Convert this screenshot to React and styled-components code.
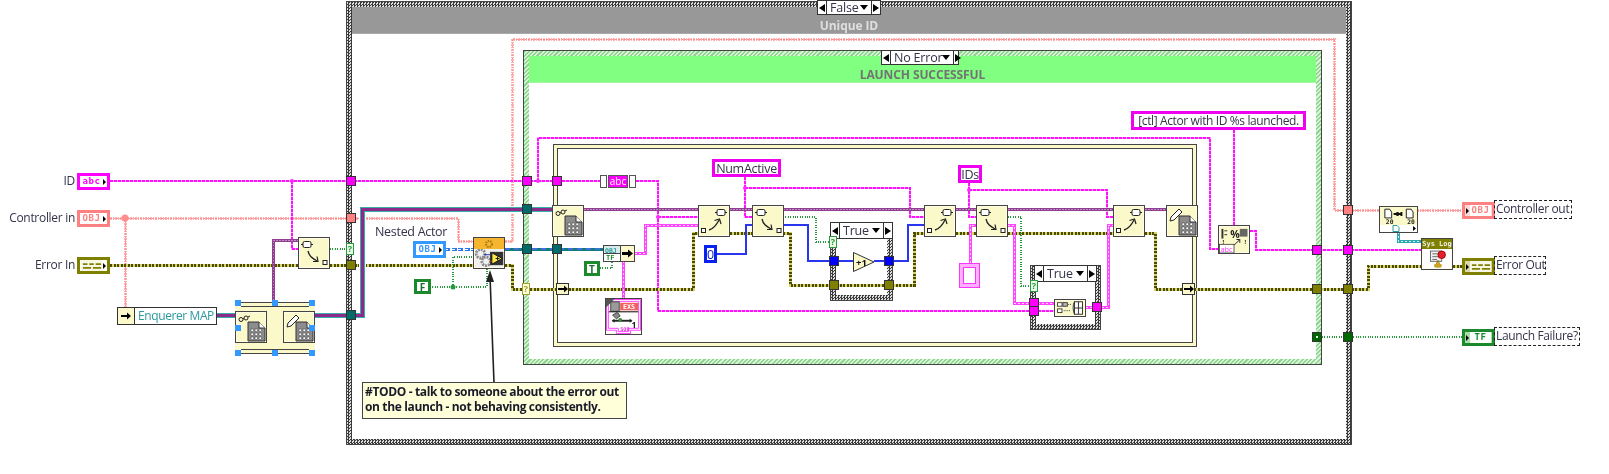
import React from 'react'
import styled, { createGlobalStyle } from 'styled-components'

const Global = createGlobalStyle`
  html, body { margin: 0; background: #fff; }
  body { font-family: "Open Sans", "Noto Sans", sans-serif; }
`

const UI = '"Open Sans", "Noto Sans", sans-serif'
const MONO = '"DejaVu Sans Mono", "Liberation Mono", monospace'

const Canvas = styled.div`
  position: relative;
  width: 1609px;
  height: 474px;
  overflow: hidden;
  background: #fff;
  filter: blur(0.3px);
`

const place = p => `
  position: absolute;
  left: ${p.$x}px;
  top: ${p.$y}px;
`

/* structures */
const Frame = styled.div`
  ${place}
  width: ${p => p.$w}px;
  height: ${p => p.$h}px;
  box-sizing: border-box;
  border: 1px solid #444;
  padding: ${p => p.$pad}px;
  display: flex;
  flex-direction: column;
  background: ${p => p.$hatch
    ? 'repeating-linear-gradient(135deg, #8ed68e 0 1.5px, #d9f3d9 1.5px 3px)'
    : 'repeating-conic-gradient(#3a3a3a 0 25%, #dedede 0 50%) 0 0 / 3px 3px'};
`
const Band = styled.div`
  height: 27px;
  flex: none;
  background: ${p => p.$color};
  border-bottom: 1px solid ${p => p.$edge};
  display: flex;
  align-items: flex-end;
  justify-content: center;
  font: 700 12px/14px ${UI};
  letter-spacing: -0.1px;
  color: ${p => p.$ink};
  box-sizing: border-box;
`
const Inside = styled.div`
  flex: 1;
  background: #fff;
`
const Sequence = styled.div`
  ${place}
  width: ${p => p.$w}px;
  height: ${p => p.$h}px;
  box-sizing: border-box;
  border: 1px solid #444;
  background: #fbf8c9;
  padding: 3px;
  display: flex;
`
const SequenceInner = styled.div`
  flex: 1;
  background: #fff;
  border: 1px solid #444;
`

const SelectorBar = styled.div`
  ${place}
  width: ${p => p.$w}px;
  height: ${p => p.$h}px;
  display: flex;
  box-sizing: border-box;
  border: 1px solid #333;
  background: #fff;
`
const SelectorArrow = styled.div`
  width: 8px;
  flex: none;
  display: flex;
  align-items: center;
  justify-content: center;
  border-${p => (p.$right ? 'left' : 'right')}: 1px solid #333;
  &::after {
    content: '';
    border-top: 4.5px solid transparent;
    border-bottom: 4.5px solid transparent;
    border-${p => (p.$right ? 'left' : 'right')}: 6px solid #000;
  }
`
const SelectorLabel = styled.div`
  flex: 1;
  display: flex;
  align-items: center;
  justify-content: space-between;
  padding: 0 3px 0 3px;
  font: 400 12.5px ${UI};
  letter-spacing: -0.2px;
  white-space: nowrap;
  color: #33334a;
  &::after {
    content: '';
    border-left: 4.5px solid transparent;
    border-right: 4.5px solid transparent;
    border-top: 5px solid #000;
  }
`
function Selector({ x, y, w, h = 15, label }) {
  return (
    <SelectorBar $x={x} $y={y} $w={w} $h={h}>
      <SelectorArrow />
      <SelectorLabel>{label}</SelectorLabel>
      <SelectorArrow $right />
    </SelectorBar>
  )
}

/* tunnels */
const Tunnel = styled.div`
  ${place}
  width: 10px;
  height: 10px;
  margin: -5px 0 0 -5px;
  box-sizing: border-box;
  background: ${p => p.$color};
  border: 1px solid #333;
  display: flex;
  align-items: center;
  justify-content: center;
  ${p => p.$dot && `&::after { content: ''; width: 2px; height: 2px; background: #dfd; }`}
`
const Selectorq = styled.div`
  ${place}
  width: 8px;
  height: 12px;
  margin: -6px 0 0 -4px;
  box-sizing: border-box;
  background: ${p => p.$bg};
  border: 1px solid ${p => p.$color};
  color: ${p => p.$color};
  font: 700 9px/10px ${UI};
  text-align: center;
`

/* terminals on the panel */
const Terminal = styled.div`
  ${place}
  width: 33px;
  height: 17px;
  box-sizing: border-box;
  border: 3px solid ${p => p.$color};
  background: ${p => p.$fill};
  display: flex;
  align-items: center;
  padding: 0 1px;
  flex-direction: ${p => (p.$out ? 'row' : 'row-reverse')};
  gap: 1px;
`
const TerminalBody = styled.div`
  flex: 1;
  height: 100%;
  background: ${p => p.$fill};
  box-sizing: border-box;
  display: flex;
  align-items: center;
  justify-content: center;
  font: 700 9px/1 ${MONO};
  letter-spacing: 0.5px;
  color: ${p => p.$color};
`
const TerminalArrow = styled.div`
  flex: none;
  border-top: 3px solid transparent;
  border-bottom: 3px solid transparent;
  border-left: 3px solid #000;
`
const Caption = styled.div`
  position: absolute;
  top: ${p => p.$y}px;
  right: ${p => 1609 - p.$r}px;
  font: 400 12px/16px ${UI};
  letter-spacing: -0.3px;
  color: #33334a;
  white-space: nowrap;
`
const DashedCaption = styled.div`
  ${place}
  height: ${p => p.$h}px;
  width: ${p => p.$w}px;
  box-sizing: border-box;
  border: 1px dashed #222;
  font: 400 12px/${p => p.$h - 3}px ${UI};
  letter-spacing: -0.35px;
  color: #33334a;
  padding-left: 1px;
  white-space: nowrap;
`
const PlainLabel = styled.div`
  ${place}
  font: 400 12.5px/16px ${UI};
  letter-spacing: -0.3px;
  color: #33334a;
  white-space: nowrap;
`

/* constants */
const Konst = styled.div`
  ${place}
  width: ${p => p.$w}px;
  height: ${p => p.$h}px;
  box-sizing: border-box;
  border: ${p => p.$b || 3}px solid ${p => p.$color};
  background: #fff;
  display: flex;
  align-items: center;
  justify-content: center;
  color: ${p => p.$ink || '#33334a'};
  font: ${p => p.$weight || 400} ${p => p.$size || 12.5}px ${UI};
  letter-spacing: ${p => p.$track || 0}px;
  white-space: nowrap;
`
const EmptyArray = styled.div`
  ${place}
  width: 21px;
  height: 25px;
  box-sizing: border-box;
  border: 1px solid #ff33ff;
  padding: 3px;
  background: #ffb0ff;
  display: flex;
  &::after { content: ''; flex: 1; background: #fff; border: 1px solid #ff33ff; }
`
const StringConst = styled.div`
  ${place}
  display: flex;
  height: 13px;
  gap: 1px;
`
const StringCap = styled.div`
  width: 5px;
  background: #fff;
  border: 1px solid #555;
`
const StringCore = styled.div`
  width: 18px;
  background: #f0f;
  color: #fff;
  border: 1px solid #555;
  font: 400 10px/11px ${UI};
  text-align: center;
`

/* nodes */
const Node = styled.div`
  ${place}
  width: ${p => p.$w || 32}px;
  height: ${p => p.$h || 32}px;
  box-sizing: border-box;
  background: ${p => p.$bg || '#fbf8c9'};
  border: 1px solid #444;
  box-shadow: inset 0 0 0 1px #fffde8;
  display: flex;
  flex-direction: column;
  overflow: hidden;
`
const NodeBar = styled.div`
  height: ${p => p.$h}px;
  flex: none;
  background: ${p => p.$color};
  color: #eee;
  font: 700 7px/${p => p.$h}px ${MONO};
  text-align: center;
  display: flex;
  align-items: center;
  justify-content: center;
`
const NodeFill = styled.div`
  flex: 1;
  min-height: 0;
  display: flex;
  background: ${p => p.$bg || 'transparent'};
`
const Icon = styled.svg`
  display: block;
  width: 100%;
  height: 100%;
`
const MapNode = styled.div`
  ${place}
  width: 100px;
  height: 18px;
  box-sizing: border-box;
  border: 1px solid #333;
  display: flex;
  background: #fff;
`
const MapNodeArrow = styled.div`
  width: 16px;
  flex: none;
  background: #fbf8c9;
  border-right: 1px solid #333;
  display: flex;
  align-items: center;
  justify-content: center;
`
const MapNodeText = styled.div`
  flex: 1;
  color: #2c9a9c;
  font: 400 12px/16px ${UI};
  letter-spacing: -0.4px;
  padding-left: 3px;
  white-space: nowrap;
`
const ArrowTab = styled.div`
  ${place}
  width: 13px;
  height: 12px;
  box-sizing: border-box;
  background: #fbf8c9;
  border: 1px solid #333;
  display: flex;
  align-items: center;
  justify-content: center;
`
const Handle = styled.div`
  ${place}
  width: 6px;
  height: 6px;
  margin: -3px 0 0 -3px;
  background: #3399ff;
`
const InPlace = styled.div`
  ${place}
  width: 80px;
  height: 52px;
  box-sizing: border-box;
  background: #fbf8c9;
  border-top: 1px solid #444;
  border-bottom: 1px solid #444;
  &::before, &::after {
    content: '';
    position: absolute;
    left: 6px;
    right: 6px;
    height: 1px;
    background: #444;
  }
  &::before { top: 3px; }
  &::after { bottom: 3px; }
`
const Comment = styled.div`
  ${place}
  width: 265px;
  height: 37px;
  box-sizing: border-box;
  border: 1px solid #444;
  background: #ffffd9;
  padding: 1px 1px 0 2px;
  font: 700 12px/15px ${UI};
  letter-spacing: -0.36px;
  color: #1a1a2a;
  white-space: nowrap;
`

/* wires */
const WIRES = {
  str: [{ s: '#ffa0ff', w: 2 }, { s: '#ff10ff', w: 2, dash: '3 1' }],
  strThick: [{ s: '#ff44ff', w: 3 }, { s: '#ffd0ff', w: 1, dash: '2 2' }],
  err: [{ s: '#d8d26a', w: 3 }, { s: '#4c4c00', w: 3, dash: '2 1.5' }],
  obj: [{ s: '#ffb0b0', w: 3, dash: '1.5 1' }, { s: '#ff8f8f', w: 1, dash: '1.5 1.5' }],
  purple: [{ s: '#8f3f8f', w: 3 }, { s: '#c28ac2', w: 1, dash: '1.5 1.5' }],
  classWire: [{ s: '#fff', w: 7 }, { s: '#39acac', w: 5 }, { s: '#8a2b8a', w: 3 }],
  num: [{ s: '#2a35f0', w: 1.3 }],
  bool: [{ s: '#279a3e', w: 1.2, dash: '1 1.4' }],
  chain: [{ s: '#2a7bf0', w: 3, dash: '5 1.5' }, { s: '#fff', w: 1, dash: '3 3.5' }],
  actor: [{ s: '#117c7c', w: 3 }, { s: '#3f6fe0', w: 2, dash: '5 4' }],
  teal: [{ s: '#2ea8b0', w: 3 }, { s: '#d5f3f3', w: 1, dash: '2 2' }]
}

const PATHS = [
  ['obj', 'M110 218 H351 M351 218 H458 V241 H473 M505 241 H512 V39 H1334 V210 H1379 M1417 210 H1462'],
  ['obj', 'M125 218 V307'],
  ['str', 'M110 181 H600 M632 181 H658 V311 H1034 M292 181 V249 H298'],
  ['str', 'M538 181 V138 H1210 V249 H1219 M1250 231 H1256 V250 H1421'],
  ['str', 'M658 217 H698 M745 177 V217 H752 M745 188 H910 V217 H924 M969 183 V217 H976 M969 190 H1107 V217 H1113'],
  ['str', 'M1234 130 V225'],
  ['err', 'M110 265 H298 M330 265 H474 M505 265 H512 V289 H693 V233 H698 M730 233 H752 M783 233 H790 V285 H914 V233 H924 M956 233 H976 M1008 233 H1113 M1145 233 H1155 V289 H1368 V266 H1421 M1453 266 H1462'],
  ['purple', 'M273 315 V240 H298 M584 209 H698 M730 209 H752 M783 209 H924 M956 209 H976 M1008 209 H1113 M1145 209 H1166'],
  ['classWire', 'M216 315 H235 M315 315 H362 V209 H552'],
  ['purple', 'M267 315 H283'],
  ['num', 'M717 254 H746 V225 H752 M783 225 H808 V261 H853 M874 261 H908 V225 H924'],
  ['bool', 'M330 249 H347 M430 287 H487 V268 M453 287 V257 H473 M600 268 H612 V261 M783 217 H816 V242 H830 M1008 217 H1021 V286 H1030 M1322 337 H1462'],
  ['chain', 'M445 249 H474'],
  ['actor', 'M505 249 H603'],
  ['strThick', 'M635 253 H645 V225 H698 M970 263 V225 H976 M1008 225 H1014 V303 H1054 M1086 307 H1108 V225 H1113 M623 261 V298'],
  ['str', 'M1034 311 H1054'],
  ['teal', 'M1398 232 V241 H1421']
]

function Wires() {
  return (
    <svg width="1609" height="474" style={{ position: 'absolute', left: 0, top: 0 }} fill="none">
      {PATHS.map(([kind, d], i) =>
        WIRES[kind].map((l, j) => (
          <path key={`${i}-${j}`} d={d} stroke={l.s} strokeWidth={l.w} strokeDasharray={l.dash} shapeRendering="crispEdges" />
        ))
      )}
      {[[125, 218, '#ff8f8f', 3.5], [292, 181, '#ff2bff', 2], [538, 181, '#ff2bff', 2], [658, 217, '#ff2bff', 2],
        [745, 188, '#ff2bff', 2], [969, 190, '#ff2bff', 2], [453, 287, '#279a3e', 2.5], [273, 315, '#8a2b8a', 2.5]].map(([x, y, c, r]) => (
        <circle key={`${x}-${y}`} cx={x} cy={y} r={r} fill={c} />
      ))}
      {/* comment leader */}
      <path d="M494 383 L490 276" stroke="#222" strokeWidth="1.6" />
      <path d="M490 270 L486 282 L494 282 Z" fill="#222" />
    </svg>
  )
}

/* node pictures */
const BundleRead = () => (
  <Icon viewBox="0 0 30 30" fill="none" stroke="#222">
    <rect x="4" y="3.5" width="8" height="6" rx="1.5" fill="#fff" />
    <path d="M2 6.5H4M12 6.5H14" />
    <path d="M9 13 C10 18 13 20 18 23" strokeWidth="1.3" />
    <path d="M14 23.5 L19 23.5 L18 18.5" strokeWidth="1.2" />
    <rect x="24" y="22.5" width="4" height="4" fill="#fff" />
  </Icon>
)
const BundleWrite = () => (
  <Icon viewBox="0 0 30 30" fill="none" stroke="#222">
    <rect x="18" y="3.5" width="8" height="6" rx="1.5" fill="#fff" />
    <path d="M16 6.5H18M26 6.5H28" />
    <path d="M10 24 C14 23 17 20 20 14" strokeWidth="1.3" />
    <path d="M15.5 14.5 L20.5 13 L22 18" strokeWidth="1.2" />
    <rect x="2.5" y="22.5" width="4" height="4" fill="#fff" />
  </Icon>
)
const DocGrid = () => (
  <g>
    <path d="M12 10 H23 L29 16 V29 H12 Z" fill="#8c8c8c" stroke="#333" />
    <path d="M23 10 V16 H29" fill="#fff" stroke="#333" />
    {[15, 19, 23].map(x => [17, 21, 25].map(y => <rect key={`${x}-${y}`} x={x} y={y} width="2.6" height="2.6" fill="#fff" stroke="#333" strokeWidth="0.5" />))}
  </g>
)
const DocRead = () => (
  <Icon viewBox="0 0 30 30" fill="none">
    <circle cx="5" cy="7.5" r="2" stroke="#222" />
    <circle cx="10" cy="6" r="2" stroke="#222" />
    <path d="M7 7 L8 6.5 M12 5 L14 4" stroke="#222" />
    <DocGrid />
  </Icon>
)
const DocWrite = () => (
  <Icon viewBox="0 0 30 30" fill="none">
    <path d="M3 15 L4 11 L12 3 L15 6 L7 14 Z" fill="#fff" stroke="#222" />
    <DocGrid />
  </Icon>
)
const Gears = () => (
  <Icon viewBox="0 0 30 20" fill="none">
    <circle cx="6" cy="5" r="4.5" stroke="#888" strokeWidth="3" strokeDasharray="2 1" />
    <circle cx="12" cy="13" r="4.5" stroke="#888" strokeWidth="3" strokeDasharray="2 1" />
    <rect x="16" y="3" width="14" height="14" fill="#333" />
    <path d="M18 4 L29 10 L18 16 Z" fill="#ffe94a" stroke="#111" />
    <path d="M22 10 H26 M24 8 V12" stroke="#111" />
    <path d="M10 6 H16" stroke="#2030c0" />
    <path d="M16 13 H18" stroke="#c03030" />
  </Icon>
)
const Gear = () => (
  <svg width="12" height="10" viewBox="0 0 12 10" fill="none">
    <circle cx="6" cy="5" r="3" stroke="#a87a10" strokeWidth="2" strokeDasharray="1.5 1" />
  </svg>
)
const FormatIcon = () => (
  <Icon viewBox="0 0 30 28" fill="none">
    <rect x="2" y="3" width="2" height="10" fill="#333" />
    <path d="M5 5 H8 M5 9 H8" stroke="#333" />
    <text x="11" y="12" fontFamily="Open Sans" fontWeight="700" fontSize="11" fill="#222">%</text>
    <rect x="21" y="3" width="8" height="8" fill="#666" />
    <text x="3" y="19" fontFamily="Open Sans" fontWeight="700" fontSize="6" fill="#222">!</text>
    <text x="26" y="19" fontFamily="Open Sans" fontWeight="700" fontSize="6" fill="#222">!</text>
    <path d="M15 20 L21 14 M17.5 14 H21 V17.5" stroke="#222" />
    <rect x="0" y="19" width="15" height="9" fill="#fff" stroke="#333" strokeWidth="0.8" />
    <text x="1" y="26.5" fontFamily="Open Sans" fontSize="7.5" fill="#ff33ff">abc</text>
  </Icon>
)
const BuildTable = () => (
  <Icon viewBox="0 0 32 18" fill="none">
    <rect x="2" y="3" width="5" height="4" fill="#fff" stroke="#333" />
    <rect x="8" y="3" width="5" height="4" fill="#bbb" stroke="#333" />
    <rect x="2" y="10" width="5" height="4" fill="#fff" stroke="#333" />
    <path d="M14 5 H17 M9 12 H17" stroke="#333" strokeDasharray="1 1" />
    <path d="M21 2 C19 5 19 12 21 16" stroke="#222" />
    <rect x="21" y="2" width="9" height="14" fill="#fff" stroke="#222" />
    <path d="M21 9 H30 M25.5 2 V16" stroke="#222" />
  </Icon>
)
const UnbundleIcon = () => (
  <Icon viewBox="0 0 38 18" fill="none">
    <path d="M5 2 H10 L12 5 V11 H5 Z M27 2 H32 L34 5 V11 H27 Z" fill="#fff" stroke="#222" />
    <text x="6" y="17" fontFamily="DejaVu Sans Mono" fontWeight="700" fontSize="6.5" fill="#222">20</text>
    <text x="28" y="17" fontFamily="DejaVu Sans Mono" fontWeight="700" fontSize="6.5" fill="#222">20</text>
    <path d="M14 7 H22 M22 5 V9" stroke="#111" strokeWidth="2" />
    <circle cx="18" cy="7" r="2" fill="#111" />
  </Icon>
)
const LogIcon = () => (
  <Icon viewBox="0 0 32 21" fill="none">
    <rect x="9" y="2" width="12" height="11" fill="#eee" stroke="#666" />
    <path d="M11 5 H19 M11 8 H19 M11 11 H16" stroke="#666" />
    <circle cx="21" cy="6" r="4" fill="#e0202c" stroke="#a00" />
    <path d="M14 19 L17 12 L20 19 Z" fill="#ecc52a" stroke="#8a6d00" />
    <rect x="13" y="16" width="8" height="3" fill="#caa21f" />
  </Icon>
)
const ExsIcon = () => (
  <Icon viewBox="0 0 37 37" fill="none">
    <path d="M0.5 0.5 H36.5 V33 H26 V36.5 H11 V33 H0.5 Z" fill="#fff" stroke="#ff3dff" strokeWidth="1" />
    <path d="M2.5 2.5 H34.5 V31 H24 V34.5 H13 V31 H2.5 Z" stroke="#ff3dff" strokeWidth="1" />
    <path d="M0 0 H9 L0 9 Z" fill="#555" />
    <rect x="5" y="3" width="9" height="10" fill="#9a9a9a" stroke="#444" />
    <rect x="15" y="4" width="19" height="8" fill="#f06060" />
    <text x="18" y="11" fontFamily="DejaVu Sans Mono" fontWeight="700" fontSize="7" fill="#fff">EXS</text>
    <path d="M3 13.5 H34" stroke="#222" strokeWidth="1.2" />
    <path d="M7 17 L12 14 L15 18 L11 21 Z" fill="#888" stroke="#444" />
    <path d="M7 23 H27" stroke="#222" strokeWidth="2" />
    <path d="M6 23 L9 21 V25 Z M28 23 L25 21 V25 Z" fill="#222" />
    <circle cx="15" cy="22" r="2" fill="#3b8a3b" />
    <text x="27" y="31" fontFamily="Open Sans" fontWeight="700" fontSize="9" fill="#222">1</text>
    <text x="15" y="33.5" fontFamily="DejaVu Sans Mono" fontWeight="700" fontSize="5.5" fill="#e030e0">SOB</text>
  </Icon>
)
const RightArrow = () => (
  <svg width="10" height="8" viewBox="0 0 10 8"><path d="M0 3 H6 V0.5 L10 4 L6 7.5 V5 H0 Z" fill="#000" /></svg>
)
const ErrorGlyph = ({ color }) => (
  <svg width="20" height="8" viewBox="0 0 22 8">
    <path d="M1 1 H6 V3 H1 Z M8 1 H13 V3 H8 Z M15 1 H21 V3 H15 Z M1 5 H10 V7 H1 Z M12 5 H21 V7 H12 Z" fill={color} />
  </svg>
)

function Control({ x, y, color, fill, body, text, out, shade }) {
  return (
    <Terminal $x={x} $y={y} $color={color} $fill={shade || '#fff'} $out={out}>
      <TerminalArrow />
      <TerminalBody $color={color} $fill={fill || '#fff'}>{body || text}</TerminalBody>
    </Terminal>
  )
}

const TUNNELS = [
  [351, 181, '#ff00ff'], [351, 218, '#ff8080'], [351, 265, '#808000'], [351, 315, '#006b6b'],
  [527, 181, '#ff00ff'], [527, 209, '#006b6b'], [527, 249, '#006b6b'], [557, 181, '#ff00ff'], [557, 249, '#006b6b'],
  [834, 261, '#0000ff'], [889, 261, '#0000ff'], [834, 285, '#808000'], [889, 285, '#808000'],
  [1034, 303, '#ff00ff'], [1034, 311, '#ff00ff'], [1097, 307, '#ff00ff'],
  [1317, 250, '#ff00ff'], [1317, 289, '#808000'], [1348, 210, '#ff8080'], [1348, 250, '#ff00ff'],
  [1348, 289, '#808000'], [1348, 337, '#006600']
]

function TabGlyph() {
  return (
    <svg width="37" height="7" viewBox="0 0 37 7">
      <path d="M13 0.5 H17 L19 2.5 V6.5 H13 Z" fill="#fff" stroke="#2c9a9c" />
      <path d="M33 1 L36 3.5 L33 6 Z" fill="#000" />
    </svg>
  )
}

function ToMoreSpecific() {
  return (
    <svg width="30" height="15" viewBox="0 0 30 15">
      <rect x="0" y="0" width="16" height="15" fill="#d6ecec" />
      <rect x="0" y="7" width="16" height="8" fill="#fff" />
      <path d="M0 7.5 H16" stroke="#444" />
      <path d="M16.5 0 V15" stroke="#444" />
      <rect x="17" y="0" width="13" height="15" fill="#fbf8c9" />
      <text x="1" y="6.5" fontFamily="DejaVu Sans Mono" fontWeight="700" fontSize="6.5" fill="#2c9a9c">OBJ</text>
      <text x="2" y="14" fontFamily="DejaVu Sans Mono" fontWeight="700" fontSize="7" fill="#1c8a2c">TF</text>
      <path d="M18 6 H24 V3.5 L29 7.5 L24 11.5 V9 H18 Z" fill="#000" />
    </svg>
  )
}

const IncrementWrap = styled.div`
  ${place}
  width: 22px;
  height: 20px;
`
function Increment({ x, y }) {
  return (
    <IncrementWrap $x={x} $y={y}>
      <svg width="22" height="20" viewBox="0 0 22 20">
        <path d="M0.5 0.5 L21 10 L0.5 19.5 Z" fill="#fbf8c9" stroke="#333" />
        <text x="3" y="13.5" fontFamily="Open Sans" fontWeight="700" fontSize="9.5" fill="#111">+1</text>
      </svg>
    </IncrementWrap>
  )
}

export default function App() {
  return (
    <Canvas>
      <Global />

      <Frame $x={346} $y={1} $w={1006} $h={444} $pad={5}>
        <Band $color="#989898" $edge="#aaa" $ink="#dfdfdf">Unique ID</Band>
        <Inside />
      </Frame>
      <Frame $x={523} $y={50} $w={799} $h={315} $pad={5} $hatch>
        <Band $color="#80ff80" $edge="#a5f5a5" $ink="#737373">LAUNCH SUCCESSFUL</Band>
        <Inside />
      </Frame>
      <Sequence $x={553} $y={144} $w={644} $h={203}><SequenceInner /></Sequence>
      <Frame $x={830} $y={222} $w={63} $h={79} $pad={5}><Inside /></Frame>
      <Frame $x={1030} $y={265} $w={71} $h={65} $pad={5}><Inside /></Frame>

      <Wires />

      <Selector x={817} y={0} w={64} h={15} label="False" />
      <Selector x={881} y={50} w={78} h={15} label="No Error" />
      <Selector x={830} y={222} w={63} h={17} label="True" />
      <Selector x={1034} y={265} w={63} h={17} label="True" />

      {TUNNELS.map(([x, y, c]) => <Tunnel key={`${x}-${y}`} $x={x} $y={y} $color={c} />)}
      <Tunnel $x={1317} $y={337} $color="#006600" $dot />
      <Selectorq $x={350} $y={249} $color="#2a9a3e" $bg="#eafbe9">?</Selectorq>
      <Selectorq $x={526} $y={289} $color="#a0a030" $bg="#fdfdd8">?</Selectorq>
      <Selectorq $x={833} $y={242} $color="#2a9a3e" $bg="#eafbe9">?</Selectorq>
      <Selectorq $x={1034} $y={286} $color="#2a9a3e" $bg="#eafbe9">?</Selectorq>

      <Caption $y={173} $r={75}>ID</Caption>
      <Caption $y={210} $r={75}>Controller in</Caption>
      <Caption $y={257} $r={75}>Error In</Caption>
      <Control x={77} y={173} color="#ff00ff" text="abc" />
      <Control x={77} y={210} color="#ff8080" text="OBJ" />
      <Control x={77} y={257} color="#808000" fill="#f7f7e6" body={<ErrorGlyph color="#808000" />} />

      <MapNode $x={117} $y={307}>
        <MapNodeArrow><RightArrow /></MapNodeArrow>
        <MapNodeText>Enquerer MAP</MapNodeText>
      </MapNode>

      <InPlace $x={235} $y={302} />
      <Node $x={235} $y={311}><DocRead /></Node>
      <Node $x={283} $y={311}><DocWrite /></Node>
      {[[238, 303], [275, 303], [312, 303], [238, 328], [312, 328], [238, 353], [275, 353], [312, 353]].map(([x, y]) => (
        <Handle key={`${x}-${y}`} $x={x} $y={y} />
      ))}

      <Node $x={298} $y={237}><BundleRead /></Node>

      <PlainLabel $x={375} $y={224}>Nested Actor</PlainLabel>
      <Control x={413} y={241} color="#3399ff" text="OBJ" />
      <Node $x={473} $y={237} $bg="#f0f0f0">
        <NodeBar $h={11} $color="#f5b52e"><Gear /></NodeBar>
        <NodeFill><Gears /></NodeFill>
      </Node>
      <Konst $x={414} $y={279} $w={17} $h={15} $color="#1c8a2c" $ink="#1c6a2c" $weight={700} $size={10}>F</Konst>
      <Konst $x={584} $y={261} $w={16} $h={15} $color="#1c8a2c" $ink="#1c6a2c" $weight={700} $size={10}>T</Konst>

      <StringConst $x={600} $y={175}>
        <StringCap /><StringCore>abc</StringCore><StringCap />
      </StringConst>

      <Node $x={552} $y={205}><DocRead /></Node>
      <Node $x={603} $y={245} $h={17} $bg="#f7f7f7"><ToMoreSpecific /></Node>
      <Node $x={605} $y={298} $w={37} $h={37} $bg="#fff"><ExsIcon /></Node>
      <ArrowTab $x={556} $y={283}><RightArrow /></ArrowTab>
      <ArrowTab $x={1182} $y={283}><RightArrow /></ArrowTab>

      <Konst $x={712} $y={159} $w={69} $h={18} $color="#f000f0" $track={-0.3}>NumActive</Konst>
      <Konst $x={958} $y={165} $w={24} $h={18} $color="#f000f0" $track={-0.3}>IDs</Konst>
      <Konst $x={1131} $y={111} $w={175} $h={19} $color="#f000f0" $size={12} $track={-0.38}>[ctl] Actor with ID %s launched.</Konst>
      <Konst $x={704} $y={245} $w={13} $h={18} $color="#0a22f0" $ink="#0a22c0">0</Konst>
      <EmptyArray $x={959} $y={263} />

      <Node $x={698} $y={205}><BundleWrite /></Node>
      <Node $x={752} $y={205}><BundleRead /></Node>
      <Node $x={924} $y={205}><BundleWrite /></Node>
      <Node $x={976} $y={205}><BundleRead /></Node>
      <Node $x={1113} $y={205}><BundleWrite /></Node>
      <Node $x={1166} $y={205}><DocWrite /></Node>

      <Increment x={853} y={252} />

      <Node $x={1054} $y={299} $h={18}><BuildTable /></Node>
      <Node $x={1218} $y={225} $h={29}><FormatIcon /></Node>

      <Node $x={1379} $y={206} $w={39} $h={27} $bg="#fff">
        <NodeFill $bg="#fbf8c9"><UnbundleIcon /></NodeFill>
        <NodeBar $h={7} $color="#fff"><TabGlyph /></NodeBar>
      </Node>
      <Node $x={1421} $y={238} $bg="#fff">
        <NodeBar $h={10} $color="#808000">Sys Log</NodeBar>
        <NodeFill><LogIcon /></NodeFill>
      </Node>

      <Control x={1462} y={202} color="#ff8080" text="OBJ" out shade="#ffd8d8" />
      <Control x={1462} y={258} color="#808000" fill="#f7f7e6" body={<ErrorGlyph color="#808000" />} out shade="#d8d8a8" />
      <Control x={1462} y={329} color="#1c8a2c" text="TF" out shade="#a8dca8" />
      <DashedCaption $x={1494} $y={200} $w={78} $h={19}>Controller out</DashedCaption>
      <DashedCaption $x={1494} $y={256} $w={52} $h={19}>Error Out</DashedCaption>
      <DashedCaption $x={1494} $y={327} $w={86} $h={19}>Launch Failure?</DashedCaption>

      <Comment $x={362} $y={382}>
        #TODO - talk to someone about the error out<br />
        on the launch - not behaving consistently.
      </Comment>
    </Canvas>
  )
}
